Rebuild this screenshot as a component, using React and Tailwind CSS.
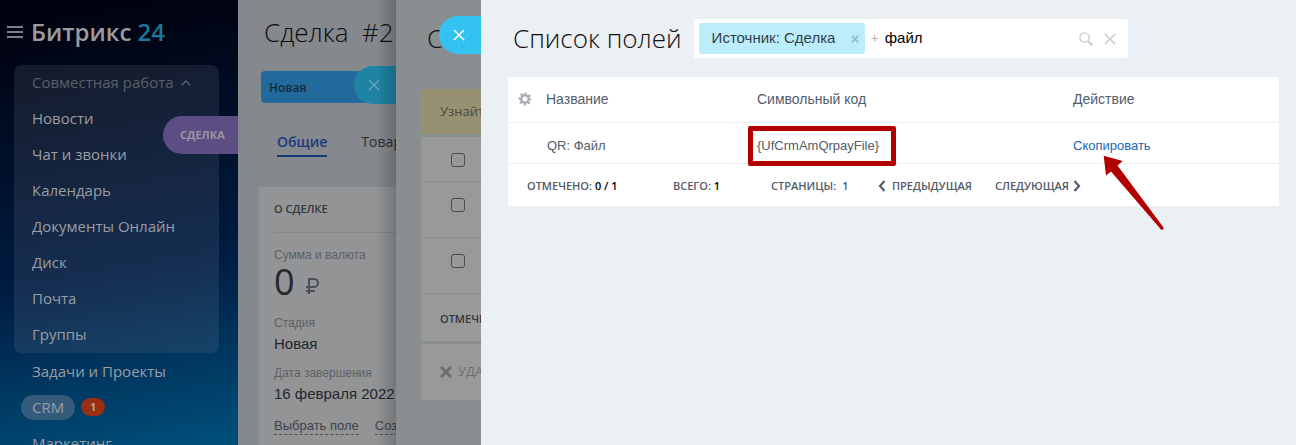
import React from "react";

const groupItems = ["Новости", "Чат и звонки", "Календарь", "Документы Онлайн", "Диск", "Почта", "Группы"];

function Cross({ className, width = 1 }) {
  return (
    <svg viewBox="0 0 12 12" className={className} fill="none" stroke="currentColor" strokeWidth={width} aria-hidden="true">
      <path d="M1 1l10 10M11 1L1 11" />
    </svg>
  );
}

function Chevron({ left }) {
  return (
    <svg viewBox="0 0 8 12" className="h-3 w-2" fill="none" stroke="#535c69" strokeWidth="2.2" aria-hidden="true">
      <path d={left ? "M6.5 1L2 6l4.500 5" : "M1.500 1L6 6l-4.500 5"} />
    </svg>
  );
}

function Gear() {
  return (
    <svg viewBox="0 0 14 14" className="h-3.5 w-3.5" fill="none" stroke="#a8adb4" aria-hidden="true">
      <circle cx="7" cy="7" r="3.700" strokeWidth="2.400" />
      <circle cx="7" cy="7" r="5.600" strokeWidth="2" strokeDasharray="2.200 2.198" strokeDashoffset="1.100" />
    </svg>
  );
}

function Sidebar() {
  return (
    <nav className="relative w-[238px] shrink-0 overflow-hidden bg-linear-[170deg] from-[#01020f] from-5% via-[#001c42] via-60% to-[#00507c] text-[15px] font-medium text-[#999da4]">
      <div className="flex h-[65px] items-center gap-2 pb-0.5 pl-[7px]">
        <button aria-label="Меню" className="flex w-4 flex-col gap-[3px]">
          <span className="h-0.5 bg-[#7c7f86]" />
          <span className="h-0.5 bg-[#7c7f86]" />
          <span className="h-0.5 bg-[#7c7f86]" />
        </button>
        <a href="#" className="text-[24px] font-semibold text-[#9b9b9d]">
          Битрикс <span className="text-[#1d779b]">24</span>
        </a>
      </div>
      <div className="mr-[19px] ml-3.5 rounded-lg bg-[#8c94a0]/15 pb-px pl-[18px]">
        <button className="flex h-[35px] items-center gap-[7px] text-[#595f6c]">
          Совместная работа
          <svg viewBox="0 0 10 6" className="h-1.5 w-2.5" fill="none" stroke="currentColor" strokeWidth="1.500" aria-hidden="true">
            <path d="M.7 5.300L5 1l4.300 4.300" />
          </svg>
        </button>
        {groupItems.map((item) => (
          <a key={item} href="#" className="flex h-9 items-center">{item}</a>
        ))}
      </div>
      <a href="#" className="flex h-9 items-center pl-8">Задачи и Проекты</a>
      <div className="flex h-9 items-center gap-1.5 pl-[21px]">
        <a href="#" className="flex h-[25px] items-center rounded-full bg-[#345b7b] px-[11px]">CRM</a>
        <span className="flex h-[18px] w-6 items-center justify-center rounded-full bg-[#982f12] text-[11px] font-bold text-[#b3a29c]">1</span>
      </div>
      <a href="#" className="flex h-9 items-center pl-8">Маркетинг</a>
      <div className="absolute top-[116px] right-0 flex h-[38px] w-[75px] items-center rounded-l-full bg-[#5c4e83] pl-[17px] text-[11px] font-bold text-[#9a95a6]">
        СДЕЛКА
      </div>
    </nav>
  );
}

function Field({ label, children }) {
  return (
    <div>
      <div className="h-[18px] text-[12px] leading-[18px] text-[#5d6165]">{label}</div>
      {children}
    </div>
  );
}

function DealPanel() {
  return (
    <section className="relative w-[158px] shrink-0 overflow-hidden bg-[#85888c] whitespace-nowrap">
      <h1 className="flex h-16 items-center pl-[26px] text-[26px] font-light whitespace-pre text-[#0c0d0f]">{"Сделка  #2"}</h1>
      <div className="mt-[7px] ml-[23px] flex h-8 items-center rounded-l-sm bg-[#226a9b] pt-0.5 pl-2 text-[12px] font-semibold text-[#112c40]">Новая</div>
      <div className="mt-6 mb-[30px] ml-[39px] flex gap-[34px] text-[14px]">
        <a href="#" className="h-[30px] border-b-2 border-[#143a76] leading-[30px] font-semibold text-[#1a3a80]">Общие</a>
        <a href="#" className="leading-[30px] font-medium text-[#2c3034]">Товары</a>
      </div>
      <div className="ml-[21px] bg-[#939496] pl-[15px] font-['Liberation_Sans',sans-serif]">
        <h2 className="flex h-[46px] items-center border-b border-[#85888b] font-['Open_Sans',sans-serif] text-[11px] font-semibold text-[#33373c]">О СДЕЛКЕ</h2>
        <div className="flex flex-col gap-2 pt-[13px]">
          <Field label="Сумма и валюта">
            <div className="flex h-[42px] items-center gap-2.5 pb-1.5 font-['Open_Sans',sans-serif] text-[36px] leading-9 text-[#25292f]">
              0
              <svg viewBox="0 0 14 18" className="mt-2 h-[18px] w-3.5" fill="none" stroke="#4c5055" strokeWidth="2" aria-hidden="true">
                <path d="M4 17V2h5a4 4 0 010 8H1M1 14h9" />
              </svg>
            </div>
          </Field>
          <Field label="Стадия">
            <div className="h-6 text-[15px] leading-6 text-[#23272c]">Новая</div>
          </Field>
          <Field label="Дата завершения">
            <div className="h-6 text-[15px] leading-6 text-[#23272c]">16 февраля 2022</div>
          </Field>
          <div className="flex gap-4 pt-1 pb-5 text-[13px] leading-4 text-[#3f4348]">
            <a href="#" className="border-b border-dashed border-[#4c5055]">Выбрать поле</a>
            <a href="#" className="border-b border-dashed border-[#4c5055]">Создать поле</a>
          </div>
        </div>
      </div>
      <button aria-label="Закрыть" className="absolute top-[66px] right-0 flex h-[38px] w-[42px] items-center rounded-l-full bg-[#1f84a3] pl-3.5 text-[#6aa5b7]">
        <Cross className="h-3 w-3" width={1.4} />
      </button>
      <div className="pointer-events-none absolute inset-y-0 right-0 w-5 bg-linear-to-r from-transparent to-black/20" />
    </section>
  );
}

function CheckRow({ className, label }) {
  return (
    <div className={className}>
      <input type="checkbox" aria-label={label} className="block h-3.5 w-3.5 appearance-none rounded-[3px] border border-[#4a4c4e]" />
    </div>
  );
}

function FieldsPanelBehind() {
  return (
    <section className="relative w-[85px] shrink-0 overflow-hidden bg-[#898e90] pl-[25px] whitespace-nowrap">
      <h1 className="ml-1.5 flex h-[77px] items-center text-[26px] font-light text-[#0e0f10]">Список</h1>
      <div className="mt-3 mb-[3px] flex h-[45px] items-center bg-[#959172] pl-[19px] text-[13px] text-[#4a4a42]">Узнайте</div>
      <div className="bg-[#999]">
        <CheckRow label="Строка 1" className="h-[45px] border-b border-[#8b8d8f] pt-4 pl-[30px]" />
        <CheckRow label="Строка 2" className="h-14 border-b border-[#8b8d8f] pt-4 pl-[30px]" />
        <CheckRow label="Строка 3" className="h-14 border-b border-[#8b8d8f] pt-4 pl-[30px]" />
        <div className="flex h-[47px] items-center pt-1 pl-[19px] text-[11px] font-semibold text-[#33373f]">ОТМЕЧЕНО</div>
      </div>
      <button className="mt-[3px] flex h-14 w-full items-center gap-1.5 bg-[#999] pl-[19px] text-[13px] text-[#6d6f72]">
        <Cross className="h-3 w-3 shrink-0" width={3} />
        УДАЛИТЬ
      </button>
      <button aria-label="Закрыть" className="absolute top-4 right-0 flex h-[38px] w-[42px] items-center rounded-l-full bg-[#2fc6f6]/95 pl-3.5 text-white">
        <Cross className="h-3 w-3" width={1.6} />
      </button>
    </section>
  );
}

function SearchBox() {
  return (
    <div className="flex h-[39px] w-[434px] items-center rounded-xs bg-white pr-3 pl-[5px] font-['Liberation_Sans',sans-serif]">
      <div className="flex h-[31px] w-[166px] items-center justify-between rounded-xs bg-[#bcedfc] pr-1.5 pl-[13px] text-[15px] text-[#333f48]">
        Источник: Сделка
        <button aria-label="Убрать условие"><Cross className="h-2 w-2 text-[#93b9c5]" width={2.4} /></button>
      </div>
      <span className="px-1.5 text-[14px] text-[#b5b9be]">+</span>
      <input aria-label="Поиск" defaultValue="файл" className="min-w-0 flex-1 text-[15px] text-black outline-none" />
      <button aria-label="Найти" className="mr-[11px]">
        <svg viewBox="0 0 14 14" className="h-3.5 w-3.5" fill="none" stroke="#c9cbce" aria-hidden="true">
          <circle cx="5.500" cy="5.500" r="4.700" strokeWidth="1.300" />
          <path d="M9 9l4.300 4.300" strokeWidth="2" />
        </svg>
      </button>
      <button aria-label="Очистить"><Cross className="h-3 w-3 text-[#c6c8cb]" width={1.5} /></button>
    </div>
  );
}

function FieldList() {
  return (
    <main className="min-w-0 flex-1 bg-[#ebf0f4] pr-[17px] pl-[27px]">
      <header className="flex h-[77px] items-center gap-3 pl-[5px]">
        <h1 className="text-[26px] font-light whitespace-nowrap text-[#111]">Список полей</h1>
        <SearchBox />
      </header>
      <div className="bg-white">
        <table className="w-full table-fixed text-left font-['Liberation_Sans',sans-serif] text-[14px] text-[#535c69]">
          <colgroup>
            <col className="w-[38px]" />
            <col className="w-[211px]" />
            <col className="w-[316px]" />
            <col />
          </colgroup>
          <thead>
            <tr className="h-[45px] border-b border-[#eceef0]">
              <th className="pl-2.5"><button aria-label="Настройки" className="block"><Gear /></button></th>
              <th className="font-normal">Название</th>
              <th className="font-normal">Символьный код</th>
              <th className="font-normal">Действие</th>
            </tr>
          </thead>
          <tbody>
            <tr className="h-[41px] border-b border-[#eceef0] text-[13px]">
              <td />
              <td className="pt-1.5 pl-px">QR: Файл</td>
              <td className="pt-1.5">
                <span className="relative">
                  {"{UfCrmAmQrpayFile}"}
                  <span className="pointer-events-none absolute -top-3 -right-[17px] -left-[9px] h-10 rounded-xs border-5 border-[#b20000]" />
                </span>
              </td>
              <td className="pt-1.5">
                <span className="relative inline-block">
                  <a href="#" className="text-[#2067b0]">Скопировать</a>
                  <svg viewBox="0 0 62 77" className="pointer-events-none absolute top-[19px] left-[30px] h-[77px] w-[62px]" fill="#b20000" aria-hidden="true">
                    <path d="M.7.700L19.700 6 14.500 10.500 60.500 72.500Q61 75.500 58 74.500L8 16.500 3 20.500Z" />
                  </svg>
                </span>
              </td>
            </tr>
          </tbody>
        </table>
        <footer className="flex h-[42px] items-center pt-[3px] pl-[19px] text-[11px] font-semibold whitespace-nowrap text-[#535c69]">
          <span className="w-[146px]">ОТМЕЧЕНО: <span className="text-black">0 / 1</span></span>
          <span className="w-[98px]">ВСЕГО: <span className="text-black">1</span></span>
          <span className="flex w-[107px] gap-1.5">СТРАНИЦЫ: <span>1</span></span>
          <button className="flex w-[117px] items-center gap-1.5"><Chevron left />ПРЕДЫДУЩАЯ</button>
          <button className="flex items-center gap-1">СЛЕДУЮЩАЯ<Chevron /></button>
        </footer>
      </div>
    </main>
  );
}

export default function App() {
  return (
    <div className="flex h-screen overflow-hidden font-['Open_Sans',sans-serif]">
      <Sidebar />
      <DealPanel />
      <FieldsPanelBehind />
      <FieldList />
    </div>
  );
}
